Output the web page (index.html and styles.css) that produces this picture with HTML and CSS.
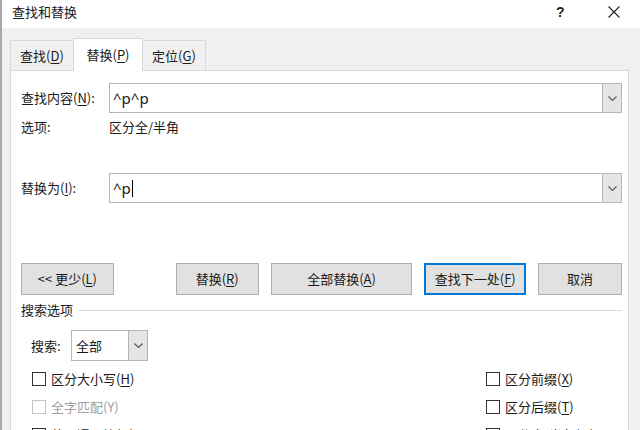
FILE: index.html
```html
<!DOCTYPE html>
<html>
<head>
<meta charset="utf-8">
<link rel="stylesheet" href="styles.css">
</head>
<body>
<div class="win">
  <div class="titlebar">
    <span class="title">查找和替换</span>
    <span class="help">?</span>
    <span class="close">
      <svg width="12" height="12" viewBox="0 0 12 12"><path d="M0.5 0.5 L11.5 11.5 M11.5 0.5 L0.5 11.5" stroke="#222" stroke-width="1.1" fill="none"/></svg>
    </span>
  </div>
  <div class="client">
    <div class="tabs">
      <div class="tab">查找(<u>D</u>)</div>
      <div class="tab active">替换(<u>P</u>)</div>
      <div class="tab">定位(<u>G</u>)</div>
    </div>
    <div class="panel">
      <div class="row find">
        <span class="label">查找内容(<u>N</u>):</span>
        <div class="combo wide">
          <span class="val">^p^p</span>
          <span class="drop"><svg width="9" height="5" viewBox="0 0 9 5"><path d="M0.5 0.5 L4.5 4.5 L8.5 0.5" stroke="#555" stroke-width="1.1" fill="none"/></svg></span>
        </div>
      </div>
      <div class="row opts">
        <span class="label">选项:</span>
        <span>区分全/半角</span>
      </div>
      <div class="row repl">
        <span class="label">替换为(<u>I</u>):</span>
        <div class="combo wide">
          <span class="val">^p<span class="caret"></span></span>
          <span class="drop"><svg width="9" height="5" viewBox="0 0 9 5"><path d="M0.5 0.5 L4.5 4.5 L8.5 0.5" stroke="#555" stroke-width="1.1" fill="none"/></svg></span>
        </div>
      </div>
      <div class="buttons">
        <div class="btn less">&lt;&lt; 更少(<u>L</u>)</div>
        <div class="btn b-repl">替换(<u>R</u>)</div>
        <div class="btn b-all">全部替换(<u>A</u>)</div>
        <div class="btn b-next">查找下一处(<u>F</u>)</div>
        <div class="btn b-cancel">取消</div>
      </div>
      <div class="group">
        <span>搜索选项</span>
        <span class="line"></span>
      </div>
      <div class="row search">
        <span class="slabel">搜索:</span>
        <div class="combo small">
          <span class="val2">全部</span>
          <span class="drop"><svg width="9" height="5" viewBox="0 0 9 5"><path d="M0.5 0.5 L4.5 4.5 L8.5 0.5" stroke="#555" stroke-width="1.1" fill="none"/></svg></span>
        </div>
      </div>
      <div class="checks">
        <label class="chk"><span class="box"></span>区分大小写(<u>H</u>)</label>
        <label class="chk"><span class="box"></span>区分前缀(<u>X</u>)</label>
        <label class="chk dis"><span class="box"></span>全字匹配(Y)</label>
        <label class="chk"><span class="box"></span>区分后缀(<u>T</u>)</label>
        <label class="chk"><span class="box"></span>使用通配符(<u>U</u>)</label>
        <label class="chk"><span class="box"></span>区分全/半角(<u>M</u>)</label>
      </div>
    </div>
  </div>
</div>
</body>
</html>
```

FILE: styles.css
```css
* { box-sizing: border-box; }
html, body { margin: 0; padding: 0; }
body {
  width: 640px;
  height: 430px;
  overflow: hidden;
  font-family: "Noto Sans CJK SC", "Noto Sans", sans-serif;
  font-size: 13px;
  color: #1a1a1a;
  background: #f0f0f0;
}
u { text-decoration: underline; text-underline-offset: 2px; }
.win {
  width: 640px;
  height: 430px;
  border-left: 2px solid #a8a8a8;
  display: flex;
  flex-direction: column;
}
.titlebar {
  height: 28px;
  background: #fff;
  display: flex;
  align-items: center;
  padding-left: 10px;
  padding-bottom: 5px;
  flex: none;
}
.title { flex: 1; font-size: 13px; line-height: 16px; }
.help {
  font-family: "Liberation Sans", sans-serif;
  font-size: 14px;
  font-weight: bold;
  color: #222;
  width: 12px;
  margin-right: 40px;
}
.close { width: 12px; height: 12px; margin-right: 20px; display: flex; }
.client {
  flex: 1;
  background: #f0f0f0;
  padding: 10px 0 0 8px;
}
.tabs {
  display: flex;
  height: 32px;
  align-items: flex-end;
}
.tab {
  height: 30px;
  padding: 0 6px;
  border: 1px solid #d9d9d9;
  border-bottom: none;
  background: #f0f0f0;
  display: flex;
  align-items: center;
  line-height: 16px;
  width: 64px;
  justify-content: center;
}
.tab + .tab { margin-left: -1px; }
.tab.active {
  height: 33px;
  background: #fff;
  position: relative;
  z-index: 1;
  width: 70px;
  margin-bottom: -1px;
}
.panel {
  width: 619px;
  height: 400px;
  background: #fff;
  border: 1px solid #d9d9d9;
  padding: 0 6px 0 10px;
}
.row { display: flex; align-items: center; }
.label { width: 88px; flex: none; line-height: 16px; }
.find { margin-top: 12px; }
.combo {
  display: flex;
  border: 1px solid #b5b5b5;
  background: #fff;
}
.combo.wide { width: 514px; height: 30px; }
.val {
  flex: 1;
  padding-left: 3px;
  font-family: "Noto Sans", sans-serif;
  font-size: 15px;
  line-height: 28px;
  display: flex;
  align-items: center;
}
.caret { display: inline-block; width: 1px; height: 17px; background: #000; margin-left: 1px; }
.drop {
  width: 19px;
  background: #e5e5e5;
  border-left: 1px solid #b5b5b5;
  display: flex;
  align-items: center;
  justify-content: center;
}
.opts { margin-top: 6px; line-height: 16px; }
.repl { margin-top: 38px; }
.buttons {
  display: flex;
  margin-top: 60px;
  height: 32px;
}
.btn {
  height: 32px;
  background: #e1e1e1;
  border: 1px solid #adadad;
  display: flex;
  align-items: center;
  justify-content: center;
  line-height: 16px;
}
.less { width: 93px; }
.b-repl { width: 83px; margin-left: 62px; }
.b-all { width: 142px; margin-left: 12px; }
.b-next { width: 102px; margin-left: 12px; border: 2px solid #0078d7; }
.b-cancel { width: 84px; margin-left: 12px; }
.group {
  display: flex;
  align-items: center;
  margin-top: 5px;
  height: 20px;
  line-height: 16px;
}
.line { flex: 1; height: 1px; background: #dcdcdc; margin-left: 6px; }
.search { margin-top: 10px; }
.slabel { width: 40px; padding-left: 10px; line-height: 16px; box-sizing: content-box; }
.combo.small { width: 77px; height: 31px; margin-left: 0; }
.val2 { flex: 1; padding-left: 4px; line-height: 29px; }
.checks {
  display: grid;
  grid-template-columns: 454px 1fr;
  grid-auto-rows: 28px;
  margin-top: 4px;
  padding-left: 11px;
}
.chk {
  display: flex;
  align-items: center;
  line-height: 16px;
}
.box {
  width: 14px;
  height: 14px;
  border: 1px solid #333;
  background: #fff;
  margin-right: 5px;
  flex: none;
}
.dis { color: #a0a0a0; }
.dis .box { border-color: #c4c4c4; }
```
